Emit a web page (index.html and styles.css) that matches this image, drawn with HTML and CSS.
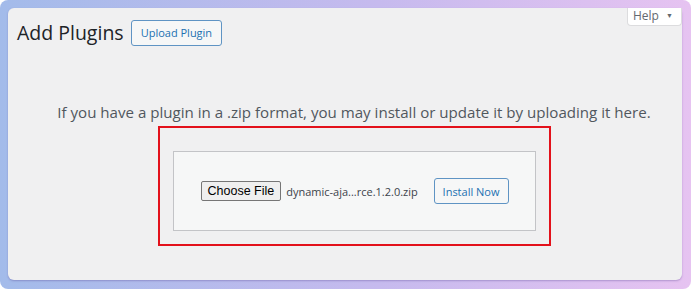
FILE: index.html
```html
<!DOCTYPE html>
<html lang="en">
<head>
<meta charset="UTF-8">
<meta name="viewport" content="width=device-width, initial-scale=1.0">
<title>Add Plugins</title>
<link rel="stylesheet" href="styles.css">
</head>
<body>
  <div class="frame">
    <div class="panel">
      <div class="help-tab">Help <span class="caret">&#9660;</span></div>
      <div class="header">
        <h1 class="title">Add Plugins</h1>
        <button class="outline-btn upload-btn">Upload Plugin</button>
      </div>
      <div class="upload-area">
        <p class="install-help">If you have a plugin in a .zip format, you may install or update it by uploading it here.</p>
        <div class="highlight">
          <div class="upload-form">
            <button class="file-btn">Choose File</button>
            <span class="file-name">dynamic-aja...rce.1.2.0.zip</span>
            <button class="outline-btn install-btn">Install Now</button>
          </div>
        </div>
      </div>
    </div>
  </div>
</body>
</html>
```

FILE: styles.css
```css
html, body {
  margin: 0;
  padding: 0;
}
body {
  width: 691px;
  height: 289px;
  overflow: hidden;
  font-family: 'Open Sans', 'Noto Sans', sans-serif;
}
.frame {
  height: 100%;
  box-sizing: border-box;
  padding: 8px 9px 9px 8px;
  background: linear-gradient(to right, #a3bbea, #c6baee 55%, #e6c3f1);
  border-radius: 8px;
}
.panel {
  position: relative;
  height: 100%;
  background-color: #f0f0f1;
  border-radius: 6px;
  box-shadow: 0 1px 2px rgba(80, 60, 140, 0.35);
}
.help-tab {
  position: absolute;
  top: 0;
  right: 0;
  width: 55px;
  height: 18px;
  box-sizing: border-box;
  padding: 0 8px 0 0;
  text-align: right;
  font-size: 12px;
  line-height: 16px;
  color: #646970;
  background-color: #fff;
  border: 1px solid #dcdcde;
  border-top: none;
  border-radius: 0 0 4px 4px;
}
.help-tab .caret {
  font-size: 7px;
  vertical-align: 2px;
  margin-left: 4px;
}
.header {
  display: flex;
  align-items: center;
  gap: 7px;
  padding: 11px 0 0 9px;
}
.title {
  margin: 0;
  font-size: 19.5px;
  font-weight: 400;
  color: #1d2327;
}
.outline-btn {
  font-family: inherit;
  background-color: #f6f7f7;
  color: #2271b1;
  border: 1px solid #5f94c4;
  border-radius: 3px;
  cursor: pointer;
}
.upload-btn {
  height: 26px;
  padding: 0 9px;
  font-size: 11px;
}
.upload-area {
  padding: 56px 0 0 18px;
  display: flex;
  flex-direction: column;
  align-items: center;
}
.install-help {
  margin: 0 0 4px;
  font-size: 15.1px;
  line-height: 20px;
  color: #50575e;
}
.highlight {
  width: 393px;
  height: 120px;
  box-sizing: border-box;
  border: 2px solid #e3111b;
  padding: 23px 13px 0 13px;
}
.upload-form {
  height: 80px;
  box-sizing: border-box;
  background-color: #f6f7f7;
  border: 1px solid #c3c4c7;
  display: flex;
  align-items: center;
  padding: 0 26px 0 27px;
}
.file-btn {
  height: 20px;
  padding: 0 6px;
  font-family: 'Liberation Sans', Arial, sans-serif;
  font-size: 12.5px;
  color: #000;
  background-color: #efefef;
  border: 1px solid #767676;
  border-radius: 2px;
}
.file-name {
  margin-left: 5px;
  font-size: 11px;
  color: #3c434a;
  flex: 1;
}
.install-btn {
  height: 26px;
  padding: 0 8px;
  font-size: 11px;
}
```
